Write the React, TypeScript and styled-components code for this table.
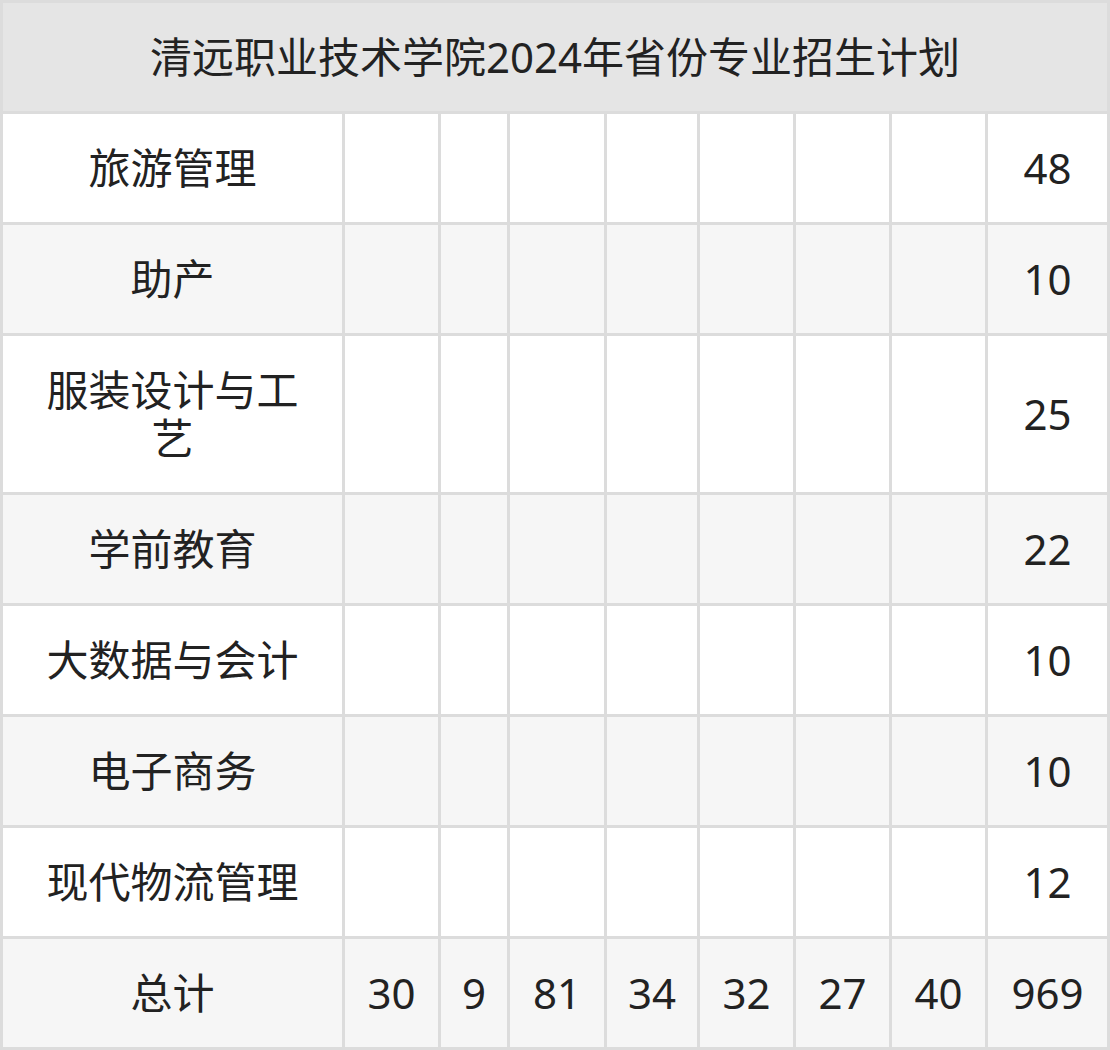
import React from "react";
import styled, { createGlobalStyle } from "styled-components";

const GlobalStyle = createGlobalStyle`
  html, body {
    margin: 0;
    padding: 0;
    background: #ffffff;
  }
  body {
    font-family: "Noto Sans", "Noto Sans CJK SC", sans-serif;
    color: #222222;
  }
`;

const Table = styled.div`
  display: grid;
  grid-template-columns: 339px 93px 66px 94px 90px 93px 93px 93px 119px;
  gap: 3px;
  padding: 3px;
  width: 1110px;
  box-sizing: border-box;
  background: #dcdcdc;
`;

const Title = styled.div`
  grid-column: 1 / -1;
  background: #e5e5e5;
  padding: 30px 0;
  line-height: 48px;
  font-size: 42px;
  text-align: center;
`;

const Cell = styled.div<{ $shade: boolean }>`
  background: ${(p) => (p.$shade ? "#f6f6f6" : "#ffffff")};
  padding: 30px 0;
  line-height: 48px;
  font-size: 42px;
  text-align: center;
  display: flex;
  align-items: center;
  justify-content: center;
`;

const NameCell = styled(Cell)`
  padding: 30px 30px;
`;

type Row = { name: string; values: string[]; total: string };

const rows: Row[] = [
  { name: "旅游管理", values: [], total: "48" },
  { name: "助产", values: [], total: "10" },
  { name: "服装设计与工艺", values: [], total: "25" },
  { name: "学前教育", values: [], total: "22" },
  { name: "大数据与会计", values: [], total: "10" },
  { name: "电子商务", values: [], total: "10" },
  { name: "现代物流管理", values: [], total: "12" },
  { name: "总计", values: ["30", "9", "81", "34", "32", "27", "40"], total: "969" },
];

export default function App() {
  return (
    <>
      <GlobalStyle />
      <Table>
        <Title>清远职业技术学院2024年省份专业招生计划</Title>
        {rows.map((r, i) => {
          const shade = i % 2 === 1;
          return (
            <React.Fragment key={r.name}>
              <NameCell $shade={shade}>{r.name}</NameCell>
              {Array.from({ length: 7 }).map((_, j) => (
                <Cell key={j} $shade={shade}>
                  {r.values[j] ?? ""}
                </Cell>
              ))}
              <Cell $shade={shade}>{r.total}</Cell>
            </React.Fragment>
          );
        })}
      </Table>
    </>
  );
}
